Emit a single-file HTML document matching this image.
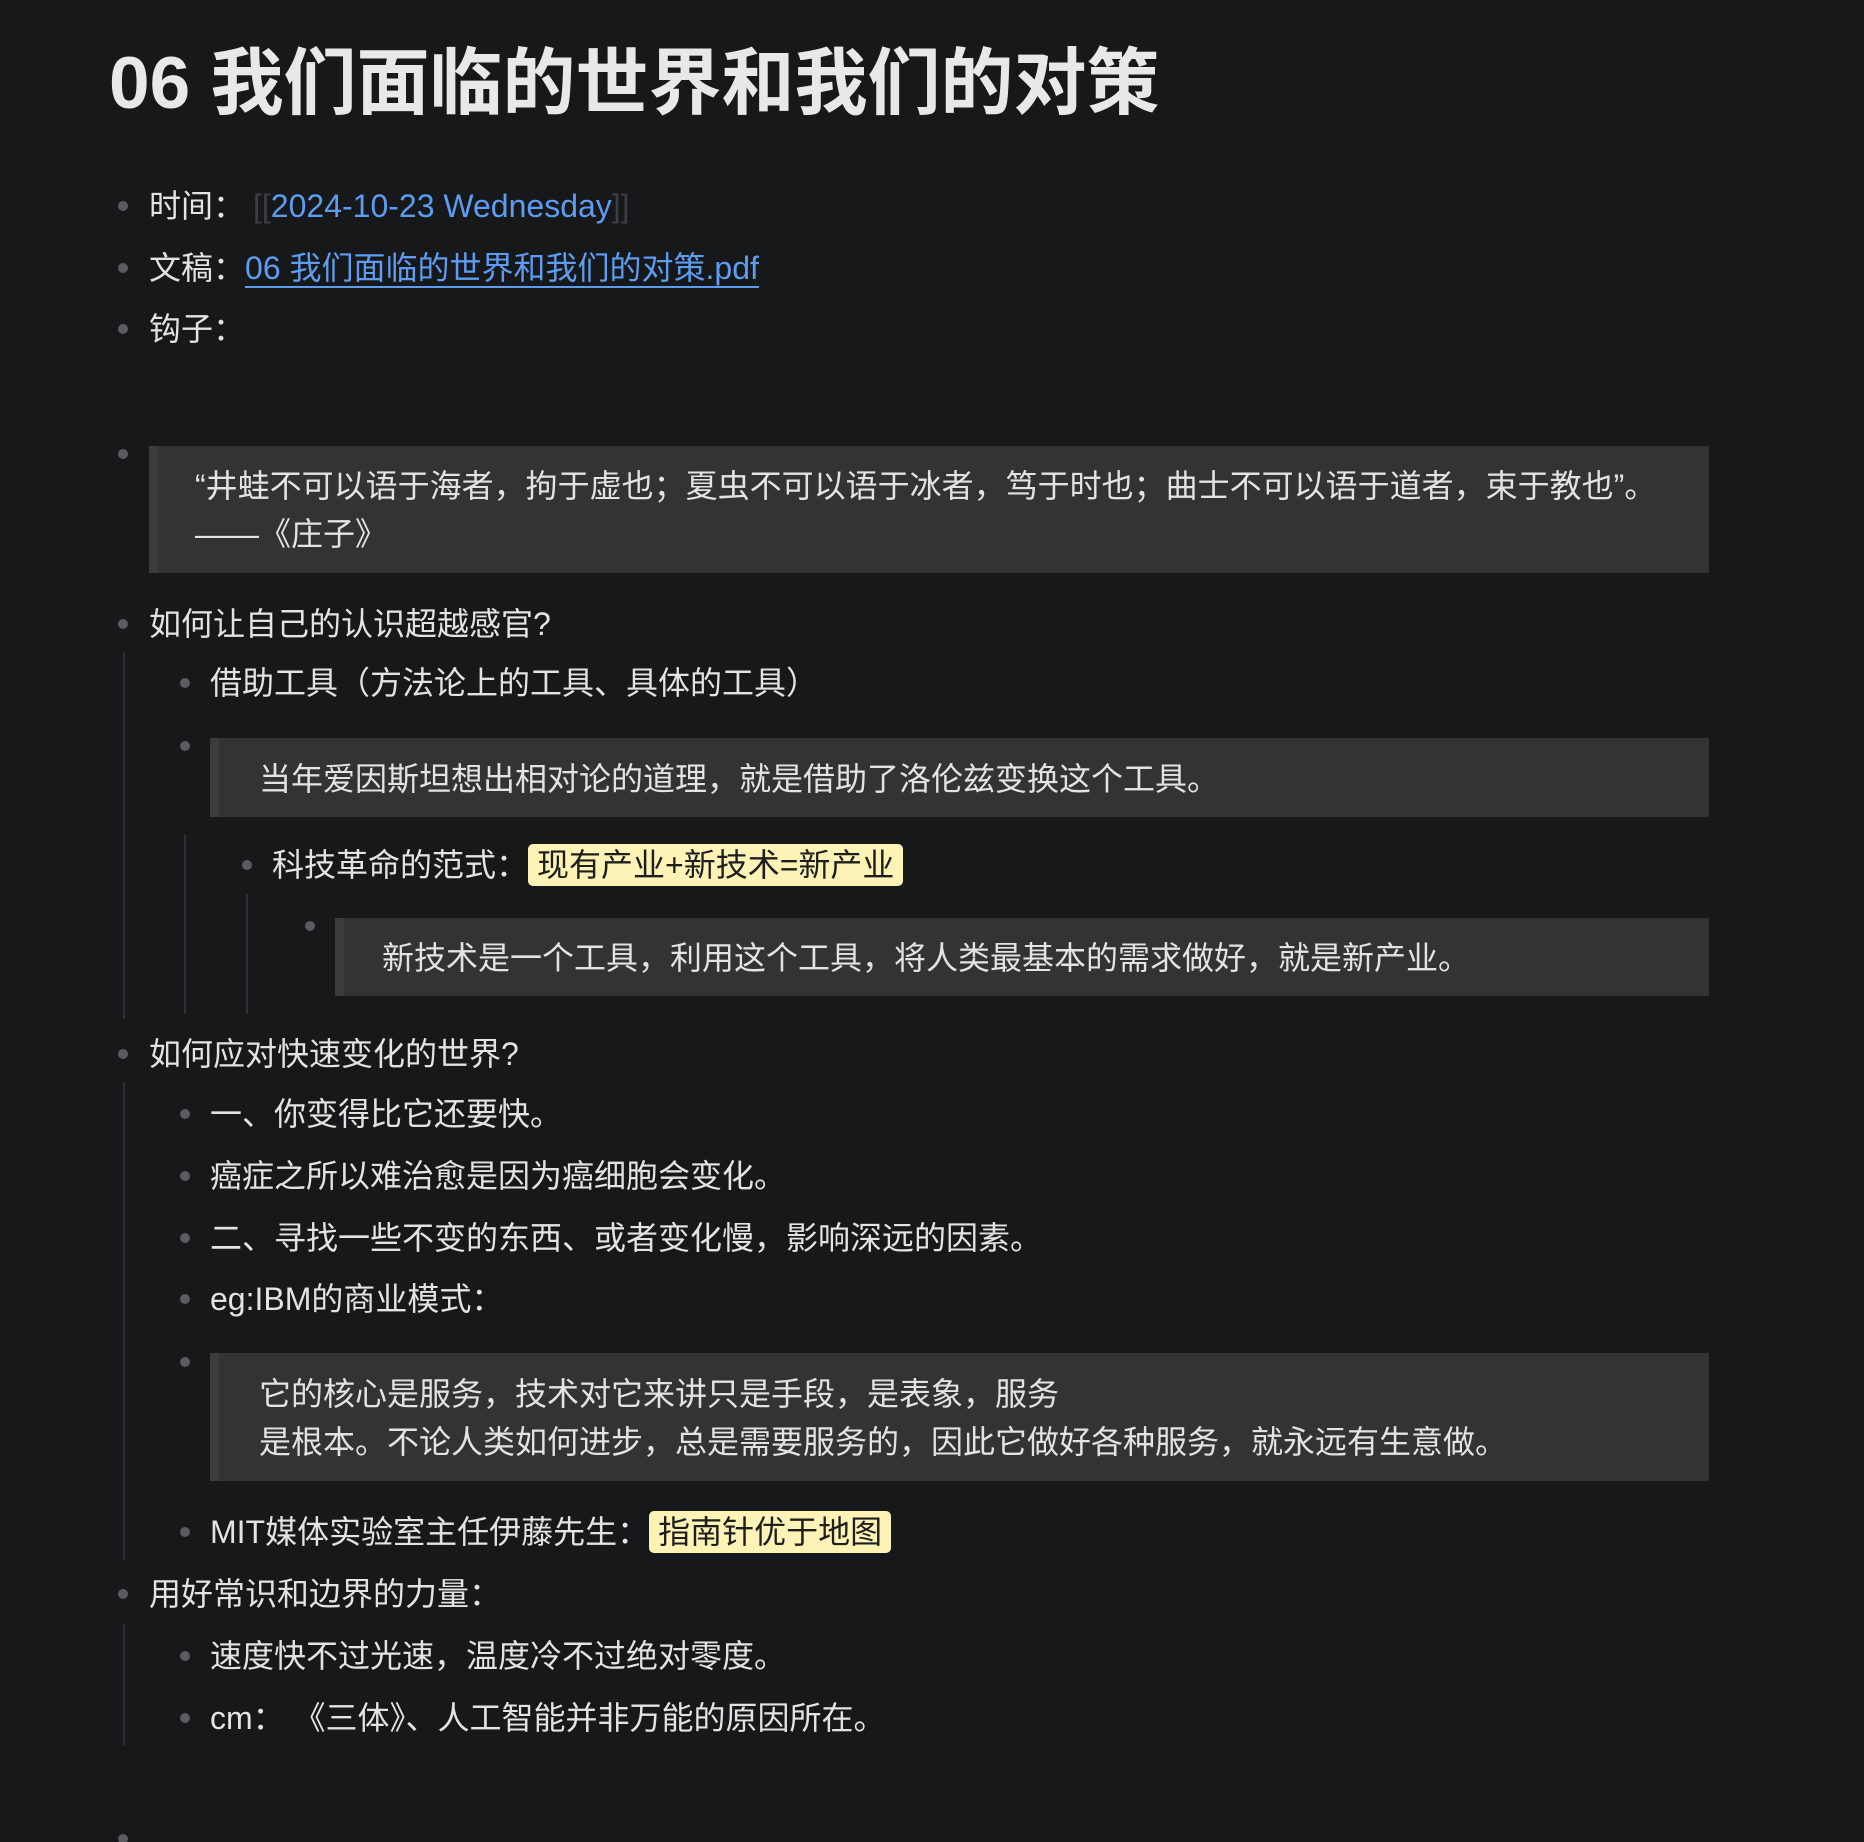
<!DOCTYPE html>
<html><head><meta charset="utf-8"><style>
html,body{margin:0;padding:0;background:#17181a;width:1864px;height:1842px;overflow:hidden}
body{position:relative;font-family:"Liberation Sans","Noto Sans CJK SC",sans-serif;color:#e2e3e4}
.t{position:absolute;font-size:32px;line-height:40px;height:40px;white-space:nowrap}
.b{position:absolute;width:10px;height:10px;border-radius:50%;background:#5a5c60}
.blk{position:absolute;background:#333333;border-left:9px solid #3c3c3c;box-sizing:border-box}
.g{position:absolute;width:2px;background:#2e2f32}
.hl{background:#fdf3b6;color:#1e1e1e;border-radius:5px;padding:3px 9px}
.lk{color:#5d9cf0}
</style></head><body>
<div class="t" style="left:109px;top:42px;font-size:73px;line-height:84px;height:84px;font-weight:600;color:#e8e8e8">06 我们面临的世界和我们的对策</div>

<div class="b" style="left:118px;top:201px"></div>
<div class="t" style="left:149px;top:186px">时间：<span style="color:#3c3e42;margin-left:8px">[[</span><span class="lk">2024-10-23 Wednesday</span><span style="color:#3c3e42">]]</span></div>
<div class="b" style="left:118px;top:263px"></div>
<div class="t" style="left:149px;top:248px">文稿：<span class="lk" style="border-bottom:2px solid #5d9cf0">06 我们面临的世界和我们的对策.pdf</span></div>
<div class="b" style="left:118px;top:324px"></div>
<div class="t" style="left:149px;top:309px">钩子：</div>

<div class="b" style="left:118px;top:449px"></div>
<div class="blk" style="left:149px;top:446px;width:1560px;height:127px"></div>
<div class="t" style="left:195px;top:466px">“井蛙不可以语于海者，拘于虚也；夏虫不可以语于冰者，笃于时也；曲士不可以语于道者，束于教也”。</div>
<div class="t" style="left:195px;top:514px">——《庄子》</div>

<div class="b" style="left:118px;top:619px"></div>
<div class="t" style="left:149px;top:604px">如何让自己的认识超越感官?</div>
<div class="g" style="left:123px;top:652px;height:367px"></div>
<div class="b" style="left:180px;top:678px"></div>
<div class="t" style="left:210px;top:663px">借助工具（方法论上的工具、具体的工具）</div>
<div class="b" style="left:180px;top:741px"></div>
<div class="blk" style="left:210px;top:738px;width:1499px;height:79px"></div>
<div class="t" style="left:259px;top:759px">当年爱因斯坦想出相对论的道理，就是借助了洛伦兹变换这个工具。</div>
<div class="g" style="left:184px;top:835px;height:179px"></div>
<div class="b" style="left:242px;top:860px"></div>
<div class="t" style="left:272px;top:845px">科技革命的范式：<span class="hl">现有产业+新技术=新产业</span></div>
<div class="g" style="left:246px;top:894px;height:120px"></div>
<div class="b" style="left:305px;top:921px"></div>
<div class="blk" style="left:335px;top:918px;width:1374px;height:78px"></div>
<div class="t" style="left:382px;top:938px">新技术是一个工具，利用这个工具，将人类最基本的需求做好，就是新产业。</div>

<div class="b" style="left:118px;top:1049px"></div>
<div class="t" style="left:149px;top:1034px">如何应对快速变化的世界?</div>
<div class="g" style="left:123px;top:1082px;height:478px"></div>
<div class="b" style="left:180px;top:1109px"></div>
<div class="t" style="left:210px;top:1094px">一、你变得比它还要快。</div>
<div class="b" style="left:180px;top:1171px"></div>
<div class="t" style="left:210px;top:1156px">癌症之所以难治愈是因为癌细胞会变化。</div>
<div class="b" style="left:180px;top:1233px"></div>
<div class="t" style="left:210px;top:1218px">二、寻找一些不变的东西、或者变化慢，影响深远的因素。</div>
<div class="b" style="left:180px;top:1294px"></div>
<div class="t" style="left:210px;top:1279px">eg:IBM的商业模式：</div>
<div class="b" style="left:180px;top:1357px"></div>
<div class="blk" style="left:210px;top:1353px;width:1499px;height:128px"></div>
<div class="t" style="left:259px;top:1374px">它的核心是服务，技术对它来讲只是手段，是表象，服务</div>
<div class="t" style="left:259px;top:1422px">是根本。不论人类如何进步，总是需要服务的，因此它做好各种服务，就永远有生意做。</div>
<div class="b" style="left:180px;top:1527px"></div>
<div class="t" style="left:210px;top:1512px">MIT媒体实验室主任伊藤先生：<span class="hl">指南针优于地图</span></div>

<div class="b" style="left:118px;top:1589px"></div>
<div class="t" style="left:149px;top:1574px">用好常识和边界的力量：</div>
<div class="g" style="left:123px;top:1624px;height:121px"></div>
<div class="b" style="left:180px;top:1651px"></div>
<div class="t" style="left:210px;top:1636px">速度快不过光速，温度冷不过绝对零度。</div>
<div class="b" style="left:180px;top:1713px"></div>
<div class="t" style="left:210px;top:1698px">cm： 《三体》、人工智能并非万能的原因所在。</div>

<div class="b" style="left:118px;top:1834px"></div>
</body></html>
